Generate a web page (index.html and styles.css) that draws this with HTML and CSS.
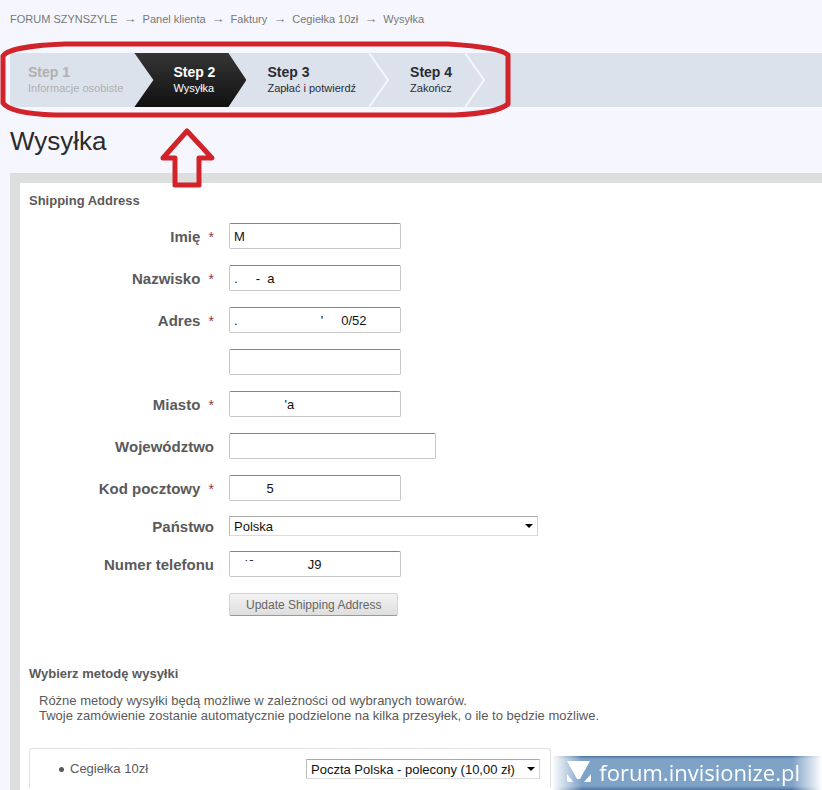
FILE: index.html
```html
<!DOCTYPE html>
<html lang="pl">
<head>
    <meta charset="UTF-8">
    <meta name="viewport" content="width=device-width, initial-scale=1.0">
    <title>Wysyłka</title>
    <link rel="stylesheet" href="styles.css">
</head>
<body>

    <nav class="breadcrumb">
        <a href="#">FORUM SZYNSZYLE</a>
        <span class="arrow">→</span>
        <a href="#">Panel klienta</a>
        <span class="arrow">→</span>
        <a href="#">Faktury</a>
        <span class="arrow">→</span>
        <a href="#">Cegiełka 10zł</a>
        <span class="arrow">→</span>
        <span>Wysyłka</span>
    </nav>

    <ol class="steps">
        <li class="step done"><strong>Step 1</strong><span>Informacje osobiste</span></li>
        <li class="step active"><strong>Step 2</strong><span>Wysyłka</span></li>
        <li class="step"><strong>Step 3</strong><span>Zapłać i potwierdź</span></li>
        <li class="separator"><svg width="20" height="54" viewBox="0 0 20 54"><path d="M0 0L19 27L0 54"/></svg></li>
        <li class="step"><strong>Step 4</strong><span>Zakończ</span></li>
        <li class="separator"><svg width="20" height="54" viewBox="0 0 20 54"><path d="M0 0L19 27L0 54"/></svg></li>
    </ol>

    <h1>Wysyłka</h1>

    <main class="panel">
        <form class="address">
            <h2>Shipping Address</h2>
            <div class="row">
                <label for="firstName">Imię <span class="required">*</span></label>
                <input type="text" id="firstName" value="M">
            </div>
            <div class="row">
                <label for="lastName">Nazwisko <span class="required">*</span></label>
                <input type="text" id="lastName" value=".     -  a">
            </div>
            <div class="row">
                <label for="address1">Adres <span class="required">*</span></label>
                <input type="text" id="address1" value=".                       '     0/52">
            </div>
            <div class="row">
                <span></span>
                <input type="text" id="address2" aria-label="Adres 2">
            </div>
            <div class="row">
                <label for="city">Miasto <span class="required">*</span></label>
                <input type="text" id="city" value="              'a">
            </div>
            <div class="row">
                <label for="state">Województwo</label>
                <input type="text" id="state" class="wide">
            </div>
            <div class="row">
                <label for="zip">Kod pocztowy <span class="required">*</span></label>
                <input type="text" id="zip" value="         5">
            </div>
            <div class="row">
                <label for="country">Państwo</label>
                <span class="select country">
                    <select id="country"><option>Polska</option></select>
                </span>
            </div>
            <div class="row">
                <label for="phone">Numer telefonu</label>
                <input type="text" id="phone" value="   ˙ˉ               J9">
            </div>
            <div class="row">
                <span></span>
                <button type="button">Update Shipping Address</button>
            </div>
        </form>

        <section class="methods">
            <h2>Wybierz metodę wysyłki</h2>
            <p>Różne metody wysyłki będą możliwe w zależności od wybranych towarów.<br>
            Twoje zamówienie zostanie automatycznie podzielone na kilka przesyłek, o ile to będzie możliwe.</p>
            <div class="package">
                <label for="method">Cegiełka 10zł</label>
                <span class="select">
                    <select id="method"><option>Poczta Polska - polecony (10,00 zł)</option></select>
                </span>
            </div>
        </section>
    </main>

    <!-- red marker around the steps, arrow pointing at the current one -->
    <svg class="marker" width="520" height="195" viewBox="0 0 520 195">
        <path d="M3 56C7 49 35 45 65 44H448C480 46 502 49 508 55V104C500 111 478 114 455 115H55C28 114 8 110 3 103Z"/>
        <path d="M187 131L212 158H199V185H175V158H163Z"/>
    </svg>

    <a class="watermark" href="#">
        <svg width="24" height="24" viewBox="0 0 24 24"><path d="M0 1H23L13 19H10ZM0 14L6 22H1L0 21ZM24 14V21L23 22H17Z"/></svg>
        <span>forum.invisionize.pl</span>
    </a>

</body>
</html>
```
FILE: styles.css
```css
* {
    box-sizing: border-box;
}

body {
    font-family: "Liberation Sans", Arial, sans-serif;
    font-size: 13px;
    color: #5a5a5a;
    margin: 0;
    padding-left: 10px;
    min-height: 100vh;
    display: flex;
    flex-direction: column;
    background-color: #f6f7fe;
}

.breadcrumb {
    display: flex;
    gap: 6px;
    padding-top: 12px;
    font-size: 11px;
    line-height: 14px;
}

.breadcrumb a, .breadcrumb span {
    color: #777;
    text-decoration: none;
}

.breadcrumb .arrow {
    font-size: 13px;
}

.steps {
    display: flex;
    height: 54px;
    margin: 27px 0 0;
    padding: 0;
    list-style: none;
    background-color: #dbe2ec;
}

.step {
    display: flex;
    flex-direction: column;
    padding: 11px 13px 0 21px;
    color: #2a2c33;
    font-size: 11px;
    line-height: 16px;
}

.step strong {
    font-size: 14px;
}

.step.done {
    padding-left: 18px;
    padding-right: 11px;
    color: #b0b0b0;
}

.step.active {
    padding-left: 39px;
    padding-right: 31px;
    color: #fff;
    background: linear-gradient(#353535, #111);
    clip-path: polygon(0 0, calc(100% - 18px) 0, 100% 50%, calc(100% - 18px) 100%, 0 100%, 19px 50%);
}

.separator path {
    fill: none;
    stroke: #f6f7fe;
    stroke-width: 2;
}

h1 {
    margin: 18px 0 16px;
    font-size: 26px;
    line-height: 32px;
    font-weight: normal;
    color: #2b2b2b;
}

h2 {
    margin: 0;
    font-size: 13px;
    line-height: 16px;
}

.panel {
    flex: 1;
    padding: 10px 0 0 9px;
    border: solid #dcdfde;
    border-width: 10px 0 0 10px;
    background-color: #fff;
}

.address {
    display: flex;
    flex-direction: column;
    gap: 16px;
}

.address h2 {
    margin-bottom: -2px;
}

.row {
    display: grid;
    grid-template-columns: 185px 1fr;
    column-gap: 15px;
    align-items: center;
    justify-items: start;
}

.row label {
    justify-self: end;
    padding-top: 2px;
    font-size: 15px;
    line-height: 16px;
    font-weight: bold;
}

.required {
    margin-left: 4px;
    font-size: 14px;
    font-weight: normal;
    color: #a03030;
}

input, select {
    font-family: inherit;
    font-size: 13px;
    color: #111;
    background-color: #fff;
    border: 1px solid #c8c8c8;
    border-top-color: #848484;
}

input {
    width: 172px;
    height: 26px;
    padding: 0 4px;
    border-radius: 2px;
}

input.wide {
    width: 207px;
}

.select {
    display: flex;
    position: relative;
}

.select::after {
    content: "";
    position: absolute;
    right: 5px;
    top: 8px;
    border: 4px solid transparent;
    border-top-color: #000;
    border-bottom: 0;
}

select {
    appearance: none;
    height: 20px;
    padding: 0 20px 0 4px;
    border-color: #aaa #d4d4d4 #dcdcdc #bbb;
}

.row .select {
    margin: -1px 0;
}

.country select {
    width: 309px;
}

button {
    height: 23px;
    padding: 0 16px;
    font-family: inherit;
    font-size: 12px;
    color: #666;
    background: linear-gradient(#f3f3f3, #dedede);
    border: 1px solid #d4d4d4;
    border-bottom-color: #999;
    border-radius: 2px;
    cursor: pointer;
}

.methods {
    margin-top: 50px;
}

.methods p {
    margin: 11px 10px 0;
    line-height: 15px;
}

.package {
    display: flex;
    align-items: flex-start;
    justify-content: space-between;
    max-width: 522px;
    margin-top: 25px;
    padding: 10px 10px 9px;
    border: 1px solid #e2e2e2;
    border-bottom: 0;
    border-radius: 3px 3px 0 0;
}

.package label {
    display: flex;
    align-items: center;
    gap: 6px;
    padding-left: 19px;
    line-height: 20px;
}

.package label::before {
    content: "";
    width: 5px;
    height: 5px;
    border-radius: 50%;
    background-color: #5a5a5a;
}

.package select {
    width: 234px;
}

.marker {
    position: absolute;
    left: 0;
    top: 0;
    pointer-events: none;
}

.marker path {
    fill: none;
    stroke: #d1232a;
    stroke-width: 5;
    stroke-linejoin: round;
}

.watermark {
    position: fixed;
    right: 0;
    bottom: 0;
    display: flex;
    align-items: center;
    gap: 8px;
    height: 34px;
    padding: 0 22px 3px 15px;
    font-family: "Open Sans", sans-serif;
    font-size: 22px;
    font-weight: 500;
    color: #fff;
    text-decoration: none;
    background: linear-gradient(#4f74a2, #7fa2c7 3px, #7fa2c7 30px, #4f74a2);
    mask-image: linear-gradient(90deg, transparent, #000 30px, #000 calc(100% - 30px), transparent);
}

.watermark path {
    fill: #fff;
}
```
